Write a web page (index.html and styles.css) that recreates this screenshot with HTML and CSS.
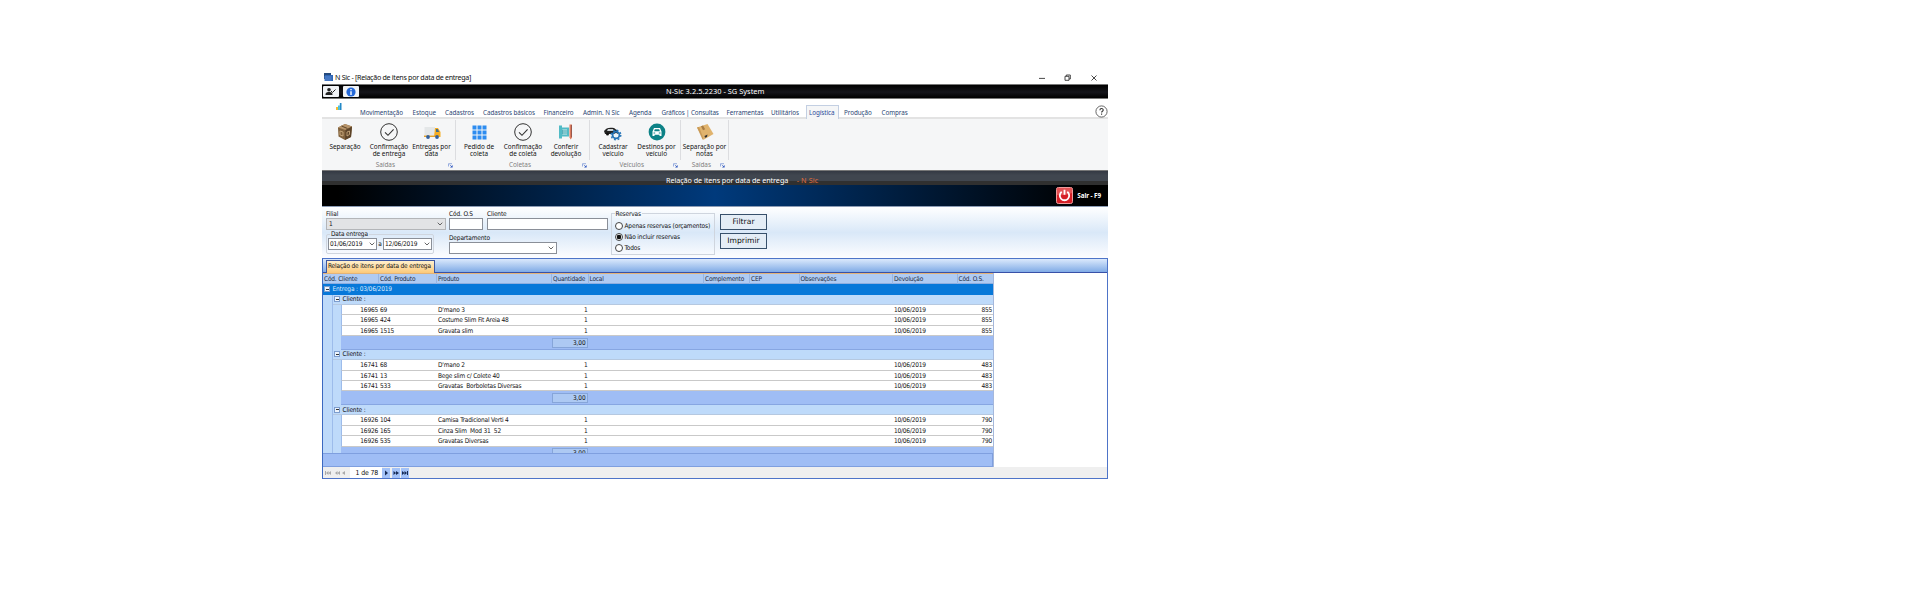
FILE: index.html
```
<!DOCTYPE html>
<html lang="pt-BR">
<head>
<meta charset="utf-8">
<title>N Sic - Relação de itens por data de entrega</title>
<link rel="stylesheet" href="styles.css">
</head>
<body>
<svg width="0" height="0" class="defs">
  <symbol id="check" viewBox="0 0 18 18"><circle cx="9" cy="9" r="8.300" fill="none" stroke="#333" stroke-width="1"/><path d="M5 9.300l3 3 5.600-6" fill="none" stroke="#333" stroke-width="1.100"/></symbol>
  <symbol id="launch" viewBox="0 0 5 5"><path d="M.5 3.500V.7H4" fill="none" stroke="#8fa6dc" stroke-width=".9"/><path d="M4.600 2v2.600H2z" fill="#2c55bf"/><path d="M1.800 1.800L4 4" stroke="#2c55bf" stroke-width=".6"/></symbol>
  <symbol id="chev" viewBox="0 0 6 4"><path d="M.7.7L3 3 5.300.7" fill="none" stroke="#555" stroke-width=".9"/></symbol>
</svg>
<main class="window">
  <header class="titlebar">
    <svg class="app" width="10" height="9" viewBox="0 0 10 9"><path d="M1 0h7v6H1z" fill="#254a7d"/><path d="M2 2h8v6H2z" fill="#2e66b5"/><path d="M1.500 3h7v5h-7z" fill="#4578c5"/></svg>
    <span>N Sic - [Relação de itens por data de entrega]</span>
    <svg class="winctl" width="60" height="8" viewBox="0 0 60 8" fill="none" stroke="#333" stroke-width=".9"><path d="M0 4.400h6M26 2.300h4v4h-4zM27.300 2.200V1h4v4H30M52.500 1.500l5 5M57.500 1.500l-5 5"/></svg>
  </header>
  <div class="blackbar">
    <div class="qb"><svg width="12" height="9" viewBox="0 0 12 9"><circle cx="4" cy="2.700" r="1.800" fill="#222"/><path d="M.5 8c0-3 2-3 3.500-3s3.500 0 3.500 3z" fill="#222"/><path d="M6 4l1.500 1.500L10.500 2.500" fill="none" stroke="#222"/></svg></div>
    <div class="qb"><svg width="10" height="10" viewBox="0 0 10 10"><circle cx="5" cy="5" r="4.600" fill="#2468d8"/><path d="M5 4.200V8M5 2v1.300" stroke="#fff" stroke-width="1.400"/></svg></div>
    <span class="apptitle">N-Sic 3.2.5.2230 - SG System</span>
  </div>
  <nav class="tabs">
    <svg class="bars" width="6" height="7" viewBox="0 0 6 7"><path d="M0 4h2v3H0z" fill="#f5bd2f"/><path d="M2 2.500h1.800V7H2z" fill="#45c1df"/><path d="M3.800 0H5.500v7H3.800z" fill="#2389c7"/></svg>
    <span>Movimentação</span><span>Estoque</span><span>Cadastros</span><span>Cadastros básicos</span><span>Financeiro</span><span>Admin. N Sic</span><span>Agenda</span><span class="tight">Gráficos | Consultas</span><span>Ferramentas</span><span>Utilitários</span><span class="on">Logística</span><span>Produção</span><span>Compras</span>
    <svg class="help" width="13" height="13" viewBox="0 0 13 13"><circle cx="6.500" cy="6.500" r="5.600" fill="none" stroke="#555" stroke-width=".9"/><path d="M4.900 5.200c0-2.200 3.300-2.200 3.300-.2 0 1.300-1.600 1.300-1.600 2.500M6.600 8.500v1.200" fill="none" stroke="#333" stroke-width="1.100"/></svg>
  </nav>
  <section class="ribbon">
    <div class="group g1">
      <div class="btns">
        <div class="btn"><svg viewBox="0 0 18 18"><path d="M2 4.500L9 1l7 2.500-1 10.500-6 3-6.500-3.500z" fill="#81623d"/><path d="M2 4.500L9 1l7 2.500L9.500 7z" fill="#b7946a"/><path d="M9.500 7L16 3.500 15 14l-6 3z" fill="#5d4429"/><path d="M4 8l3 1v4l-3-1zM11 9l2.500-1v3.500L11 13z" fill="none" stroke="#d0b083" stroke-width=".8"/><path d="M5.500 3l6 2.500" stroke="#5d4429"/></svg>Separação</div>
        <div class="btn"><svg><use href="#check"/></svg>Confirmação<br>de entrega</div>
        <div class="btn"><svg viewBox="0 0 18 18"><path d="M1.500 4H12v8H1.500z" fill="#e4e7e8"/><path d="M12 5h3l2.500 4v5H11z" fill="#f6ad22"/><path d="M13 6h1.700l1.600 3H13z" fill="#446e8a"/><path d="M1 12.500h11V14H1z" fill="#e3a02b"/><circle cx="5" cy="14" r="1.900" fill="#315f9d"/><circle cx="14" cy="14" r="1.900" fill="#315f9d"/></svg>Entregas por<br>data</div>
      </div>
      <div class="cap">Saídas<svg><use href="#launch"/></svg></div>
    </div>
    <div class="group g2">
      <div class="btns">
        <div class="btn"><svg viewBox="0 0 18 18" fill="#2d8cf0"><path d="M2.500 2.500h4v4h-4zM7.500 2.500h4v4h-4zM12.500 2.500h4v4h-4zM2.500 7.500h4v4h-4zM7.500 7.500h4v4h-4zM12.500 7.500h4v4h-4zM2.500 12.500h4v4h-4zM7.500 12.500h4v4h-4zM12.500 12.500h4v4h-4z"/></svg>Pedido de<br>coleta</div>
        <div class="btn nudge"><svg><use href="#check"/></svg>Confirmação<br>de coleta</div>
        <div class="btn"><svg viewBox="0 0 18 18"><path d="M2 2.500h3v2h7v9H5v2H2z" fill="#51bbc6"/><path d="M5 6h5v6H5z" fill="#a9e0e3"/><path d="M5.500 6.500v5M7 6.500v5M9 6.500v5" stroke="#3395a5" stroke-width=".7"/><path d="M12.500 1.500h2.500v13l-1.300 2-1.200-2z" fill="#d9795c"/><path d="M14.500 2v12" stroke="#7c4a45" stroke-width=".7"/></svg>Conferir<br>devolução</div>
      </div>
      <div class="cap">Coletas<svg><use href="#launch"/></svg></div>
    </div>
    <div class="group g3">
      <div class="btns">
        <div class="btn"><svg viewBox="0 0 18 18"><path d="M0 8c2-3 5-4 10-3l4 3v3H1z" fill="#222"/><path d="M4 6h5l1 2H3z" fill="#ccd2d5"/><circle cx="3.500" cy="11" r="1.500" fill="#111"/><g fill="none" stroke="#2574b8"><circle cx="12" cy="12" r="3.400" stroke-width="1.800"/><circle cx="12" cy="12" r="4.800" stroke-width="1.400" stroke-dasharray="1.900 1.870"/></g><circle cx="12" cy="12" r="2" fill="#eaf3f8"/></svg>Cadastrar<br>veículo</div>
        <div class="btn"><svg viewBox="0 0 18 18"><circle cx="9" cy="9" r="8.400" fill="#0d8287"/><path d="M4.500 8.500L6 5h6l1.500 3.500V13h-2v-1.200h-5V13h-2z" fill="#fff"/><path d="M6.800 6.200h4.400l.7 2H6.100z" fill="#0d8287"/><path d="M5.500 10h1.700M10.800 10h1.700" stroke="#0d8287" stroke-width="1"/></svg>Destinos por<br>veículo</div>
      </div>
      <div class="cap">Veículos<svg><use href="#launch"/></svg></div>
    </div>
    <div class="group g4">
      <div class="btns">
        <div class="btn"><svg viewBox="0 0 18 18"><path d="M1 4.500L11.500 1l6 10L8 16.500z" fill="#e0b36d"/><path d="M1 4.500L6.500 16.500H8L3 4z" fill="#c99a56"/><path d="M5 3.200l2-.8 2.200 3.800-2.200 1z" fill="#a87c43"/><path d="M8.500 13l3-1.500-.5 2.500-2 .8z" fill="#32302e"/></svg>Separação por<br>notas</div>
      </div>
      <div class="cap">Saídas<svg><use href="#launch"/></svg></div>
    </div>
  </section>
  <div class="subtitle"><span>Relação de itens por data de entrega</span><em>- N Sic</em></div>
  <div class="navy">
    <svg width="17" height="17" viewBox="0 0 17 17"><rect x=".5" y=".5" width="16" height="16" rx="1.800" fill="#d51f27" stroke="#ee9c9c"/><path d="M1 1h15v5Q8 9 1 8z" fill="#e86668" opacity=".7"/><path d="M5.700 4.800a4.700 4.700 0 1 0 5.600 0M8.500 2.800v5" fill="none" stroke="#fff" stroke-width="1.800"/></svg>
    <span>Sair - F9</span>
  </div>
  <form class="filters">
    <div class="c1">
      <label>Filial</label>
      <div class="box gray">1<svg><use href="#chev"/></svg></div>
      <div class="dates"><span class="legend">Data entrega</span>
        <div class="box">01/06/2019<svg><use href="#chev"/></svg></div><i>a</i><div class="box">12/06/2019<svg><use href="#chev"/></svg></div>
      </div>
    </div>
    <div class="c2">
      <div class="pair"><div class="os"><label>Cód. O.S</label><div class="box"></div></div><div class="cli"><label>Cliente</label><div class="box"></div></div></div>
      <label class="dep">Departamento</label>
      <div class="box depbox"><svg><use href="#chev"/></svg></div>
    </div>
    <div class="c3"><span class="legend">Reservas</span>
      <p><b></b>Apenas reservas (orçamentos)</p><p><b class="sel"></b>Não incluir reservas</p><p><b></b>Todos</p>
    </div>
    <div class="c4"><div class="cmd">Filtrar</div><div class="cmd">Imprimir</div></div>
  </form>
  <section class="panel">
    <div class="strip"><div class="ptab">Relação de itens por data de entrega</div></div>
    <div class="table">
      <div class="row head"><span>Cód. Cliente</span><span>Cód. Produto</span><span>Produto</span><span>Quantidade</span><span>Local</span><span>Complemento</span><span>CEP</span><span>Observações</span><span>Devolução</span><span>Cód. O.S.</span></div>
      <div class="entrega"><b class="minus"></b>Entrega : 03/06/2019</div>
      <div class="body">
        <div class="cg"><div class="client"><b class="minus"></b>Cliente :</div>
          <div class="row"><span>16965</span><span>69</span><span>D'mano 3</span><span>1</span><span>10/06/2019</span><span>855</span></div>
          <div class="row"><span>16965</span><span>424</span><span>Costume Slim Fit Areia 48</span><span>1</span><span>10/06/2019</span><span>855</span></div>
          <div class="row"><span>16965</span><span>1515</span><span>Gravata slim</span><span>1</span><span>10/06/2019</span><span>855</span></div>
          <div class="sum"><span>3,00</span></div></div>
        <div class="cg"><div class="client"><b class="minus"></b>Cliente :</div>
          <div class="row"><span>16741</span><span>68</span><span>D'mano 2</span><span>1</span><span>10/06/2019</span><span>483</span></div>
          <div class="row"><span>16741</span><span>13</span><span>Bege slim c/ Colete 40</span><span>1</span><span>10/06/2019</span><span>483</span></div>
          <div class="row"><span>16741</span><span>533</span><span>Gravatas&nbsp; Borboletas Diversas</span><span>1</span><span>10/06/2019</span><span>483</span></div>
          <div class="sum"><span>3,00</span></div></div>
        <div class="cg"><div class="client"><b class="minus"></b>Cliente :</div>
          <div class="row"><span>16926</span><span>104</span><span>Camisa Tradicional Verti 4</span><span>1</span><span>10/06/2019</span><span>790</span></div>
          <div class="row"><span>16926</span><span>165</span><span>Cinza Slim&nbsp; Mod 31&nbsp; 52</span><span>1</span><span>10/06/2019</span><span>790</span></div>
          <div class="row"><span>16926</span><span>535</span><span>Gravatas Diversas</span><span>1</span><span>10/06/2019</span><span>790</span></div>
          <div class="sum"><span>3,00</span></div></div>
      </div>
      <div class="foot"></div>
    </div>
    <div class="pager">
      <svg width="27" height="10" viewBox="0 0 27 10" fill="#aaa"><path d="M2 3h1v4H2zM5.500 3v4L3 5zM8 3v4L5.500 5zM14.500 3v4L12 5zM17 3v4l-2.500-2zM22 3v4l-3-2z"/></svg>
      <span>1 de 78</span>
      <i><svg viewBox="0 0 8 10"><path d="M3 2.500v5L6 5z"/></svg></i><i><svg viewBox="0 0 8 10"><path d="M1.500 3v4l2.500-2zM4 3v4l3-2z"/></svg></i><i><svg viewBox="0 0 8 10"><path d="M1 3v4l2.500-2zM3.500 3v4L6 5zM6 3h1v4H6z"/></svg></i>
    </div>
  </section>
</main>
</body>
</html>
```
FILE: styles.css
```
* { box-sizing: border-box; }
body { margin: 0; background: #fff; width: 1920px; height: 600px; overflow: hidden; font-family: "DejaVu Sans Condensed", "DejaVu Sans", sans-serif; font-stretch: condensed; font-size: 6.5px; line-height: 8px; letter-spacing: -.14px; color: #111; white-space: nowrap; }
.defs { position: absolute; }
i, em { font-style: normal; }
p { margin: 0; }
.window { width: 786px; height: 414px; margin: 66px 0 0 322px; display: flex; flex-direction: column; }
.window svg { display: block; flex: none; }

.titlebar { height: 18px; display: flex; align-items: center; padding: 5px 7px 0 1px; font: 7.1px/9px "Noto Sans", sans-serif; color: #111; letter-spacing: -.29px; }
.app { margin-right: 2px; }
.winctl { margin-left: auto; margin-right: 2px; }

.blackbar { height: 15px; background: linear-gradient(#000, #15151a 55%, #000); border-top: 1px solid #777; border-bottom: 1px solid #777; display: flex; align-items: center; gap: 4px; padding-left: 1px; }
.qb { width: 16px; height: 11px; background: #f1f3f6; border-radius: 1px; display: flex; align-items: center; justify-content: center; }
.apptitle { margin-left: 303px; font: 7.4px/9px "Noto Sans", sans-serif; color: #fff; letter-spacing: .03px; }

.tabs { height: 20px; border-bottom: 2px solid #e3e3e3; display: grid; grid-template-columns: 38px 52.5px 32.5px 38px 60.5px 39.5px 46px 32.5px 65px 44.5px 35px 38px 37.5px 213.5px 13px; align-items: end; font: 6.3px/8px "Noto Sans", sans-serif; color: #2b4674; letter-spacing: -.06px; }
.tabs .tight { letter-spacing: -.14px; }
.bars { margin: 0 0 7px 14px; }
.tabs .on { border: 1px solid #c3cfe2; border-bottom: 0; background: #f5f6f7; width: 33px; height: 14px; padding: 3px 0 0 2px; margin-bottom: -2px; color: #2b4a9a; }
.help { margin-bottom: -1px; }

.ribbon { height: 51px; background: #f5f6f7; display: flex; font: 6.4px/7.4px "Noto Sans", sans-serif; letter-spacing: 0; }
.group { border-right: 1px solid #dcdde0; height: 40px; margin-top: 1px; }
.btns { display: flex; height: 41px; padding-top: 3px; }
.btn { text-align: center; width: 44px; color: #111; }
.btn svg { width: 18px; height: 18px; margin: 0 auto 2px; }
.g1 { width: 134px; padding-left: 1px; } .g1 .btn:nth-child(3) { width: 41px; }
.g2 { width: 134px; } .g2 .btn:first-child { width: 46px; } .g2 .btn:nth-child(2) { width: 42px; }
.g3 { width: 91px; } .g3 .btn:first-child { width: 46px; } .g3 .btn:nth-child(2) { width: 41px; }
.g4 { width: 48px; } .g4 .btn { width: 46px; margin-left: .5px; }
.cap { display: flex; justify-content: flex-end; align-items: center; color: #808080; height: 8px; }
.cap svg { width: 5px; height: 5px; margin-top: 1px; }
.g1 .cap { padding-right: 2px; } .g1 .cap svg { margin-left: 53px; }
.g2 .cap { padding-right: 2px; } .g2 .cap svg { margin-left: 51px; }
.g3 .cap { padding-right: 2px; } .g3 .cap svg { margin-left: 29px; }
.g4 .cap { padding-right: 3px; } .g4 .cap svg { margin-left: 9px; }

.subtitle { height: 15px; border-top: 1px solid #777; background: linear-gradient(#343943 0, #40464f 30%, #40464f 72%, #303030 74%); padding: 4.5px 0 0 344px; font: 7.2px/9px "Noto Sans", sans-serif; color: #fff; display: flex; letter-spacing: -.05px; }
.subtitle em { margin-left: 8.5px; color: #e06c3a; letter-spacing: .1px; }
.navy { height: 22px; background: linear-gradient(90deg, #000 2%, #003a7c 50%, #000 97%); border-bottom: 1px solid #8c9cb5; display: flex; align-items: center; justify-content: flex-end; padding-right: 7px; gap: 4px; color: #fff; font: bold 6.3px/8px "Noto Sans", sans-serif; letter-spacing: -.07px; }

.filters { height: 51px; background: linear-gradient(#fff, #d9e8f8 50%, #fdfdff); display: flex; padding-left: 4px; }
label { display: block; height: 11px; padding-top: 2.5px; }
.box { height: 12px; border: 1px solid #8a8f98; background: #fff; display: flex; align-items: center; padding: 0 2px; }
.box svg { width: 6px; height: 4px; margin-left: auto; }
.gray { background: #e2e3e5; border-color: #b3b5b8; }
.c1 { width: 123px; } .c1 > .box { width: 120px; }
.dates { position: relative; width: 108px; height: 20px; margin-top: 4px; border: 1px solid #cfd5de; border-radius: 2px; display: flex; padding: 3px 1px; }
.dates .box { width: 49px; padding: 0 1px 0 1px; }
.dates i { width: 6px; text-align: center; padding-top: 2px; }
.legend { position: absolute; left: 3px; top: -4px; background: #dfebf8; padding: 0 1px; line-height: 7px; }
.c2 { width: 161.5px; } .pair { display: flex; } .os { width: 34px; margin-right: 4px; } .cli { width: 121px; }
.dep { height: 12px; line-height: 0; padding-top: 7.5px; } .depbox { width: 108px; }
.c3 { position: relative; width: 104px; height: 42px; margin: 6px 5.5px 0 0; border: 1px solid #cfd5de; padding: 6px 0 0 3.5px; }
.c3 .legend { background: #f4f8fd; top: -3px; }
.c3 p { display: flex; align-items: center; height: 11px; gap: 1.5px; }
.c3 b { flex: none; width: 8px; height: 8px; border: 1px solid #444; border-radius: 50%; background: #fff; }
.c3 .sel { background: radial-gradient(#111 0 2px, #fff 2.6px); }
.c4 { padding-top: 7px; display: flex; flex-direction: column; gap: 3px; }
.cmd { width: 47px; height: 16px; border: 1px solid #37506b; background: #e4edf6; text-align: center; font: 7.6px/13px "DejaVu Sans", sans-serif; letter-spacing: .02px; }

.panel { height: 221px; border: 1px solid #4e74c8; border-left-color: #3c69c0; display: flex; flex-direction: column; }
.strip { height: 14px; background: linear-gradient(#dbe9fc, #80abe6); border-bottom: 1px solid #3851a8; flex: none; display: flex; align-items: flex-end; padding-left: 3px; }
.ptab { width: 109px; height: 13px; margin-bottom: -1px; background: linear-gradient(#fff0cd, #fcc979); border: 1px solid #3d579f; border-bottom: 0; padding-left: 1px; line-height: 11px; letter-spacing: -.16px; }
.table { width: 671px; height: 194px; flex: none; display: flex; flex-direction: column; border-right: 1px solid #a5b8dc; }
.row { display: grid; grid-template-columns: 55px 58px 115px 36.5px 115.5px 46px 49.5px 93.5px 64.5px 36.5px; height: 10.4px; line-height: 10px; background: #fff; border-bottom: 1px solid #c9c9c9; letter-spacing: -.19px; }
.row span { padding-left: 2px; }
.head { height: 11px; background: #b0cbf2; border-top: 1px solid #e3b378; border-bottom-color: #8eaee0; line-height: 10.5px; color: #1d2b45; }
.head span + span { border-left: 1px solid #98b5e3; padding-left: 1px; }
.head span { padding-left: 1px; }
.entrega { height: 10.5px; background: #0778d9; color: #d8ebff; display: flex; align-items: center; gap: 2.5px; padding-left: 1px; }
.minus { width: 6px; height: 6px; border: .5px solid #7d9dce; background: linear-gradient(#333, #333) center / 3px 1px no-repeat, #edf4fc; }
.body { height: 158.5px; overflow: hidden; padding-left: 9px; background: #bedafa; }
.cg { height: 55.3px; padding-left: 8px; border-left: 1px solid #9dbceb; }
.client { height: 10.4px; margin-left: -8px; display: flex; align-items: center; gap: 2.5px; padding-left: 1px; border-bottom: 1px solid #b5c8e0; background: #bedafa; }
.cg .row { grid-template-columns: 36px 58px 114.5px 38px 303.5px 64.5px 1fr; border-left: 1px solid #9dbceb; }
.cg .row span:first-child { text-align: right; padding: 0; }
.cg .row span:nth-child(4) { text-align: right; padding-right: 1px; }
.cg .row span:nth-child(5) { grid-column: 6; }
.cg .row span:nth-child(6) { text-align: right; padding-right: 1px; }
.sum { height: 13.7px; background: #9fbdf5; border-bottom: 1px solid #87a6e2; padding: 1.5px 0 0 211px; }
.sum span { display: block; width: 36px; height: 10.5px; border: 1px solid #86a5d9; background: #adc9f3; text-align: right; padding-right: 1.5px; line-height: 9px; }
.foot { height: 14px; background: #9fbdf5; border: 1px solid #7f9fdf; border-left: 0; flex: none; }
.pager { height: 11px; background: #efefef; display: flex; align-items: center; font-size: 6.9px; }
.pager span { background: #fff; width: 32px; height: 11px; line-height: 12px; padding-left: 5.5px; margin-right: 0; }
.pager i { width: 8px; height: 10px; background: #a3c2f8; margin-right: 1.7px; }
.pager i svg { width: 8px; height: 10px; fill: #172b55; }
```
